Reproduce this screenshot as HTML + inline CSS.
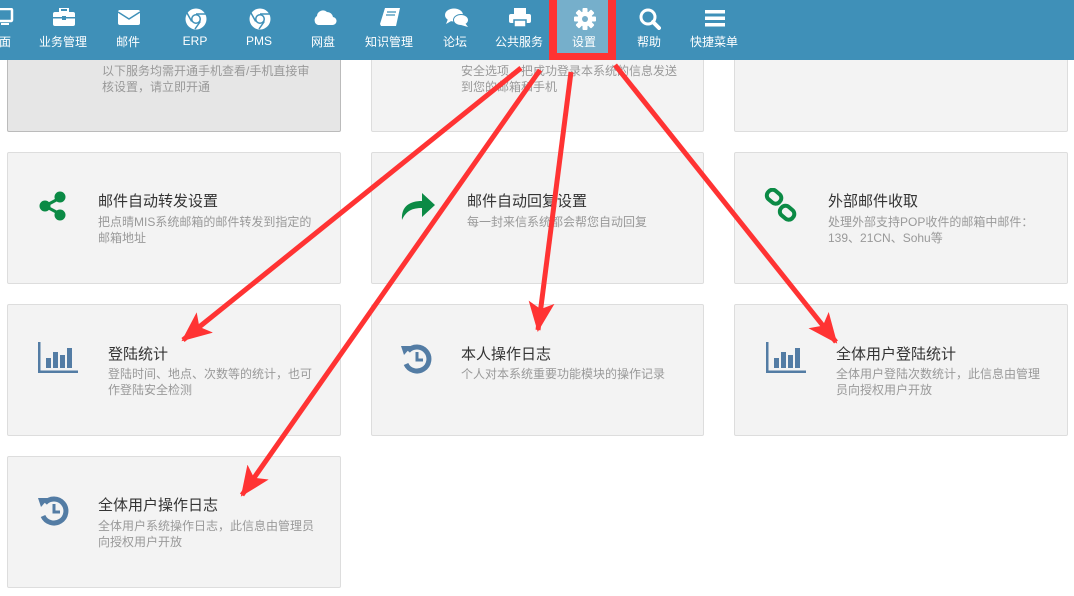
<!DOCTYPE html>
<html><head><meta charset="utf-8"><style>
*{margin:0;padding:0;box-sizing:border-box}
body{width:1074px;height:596px;overflow:hidden;background:#fff;font-family:"Liberation Sans","Noto Sans CJK SC",sans-serif;position:relative}
.nav{position:absolute;left:0;top:0;width:1074px;height:60px;background:#3f90b8}
.it{position:absolute;top:0;height:60px;color:#fff;font-size:12px;text-align:center;width:70px;margin-left:-35px}
.it svg{position:absolute;left:25px;top:8px}
.it span{position:absolute;left:0;right:0;top:33px}
.sel{position:absolute;left:549px;top:0;width:67px;height:60px;border:5px solid #f33;border-top:none;background:#f33}
.sel div{position:absolute;left:3px;top:0;width:51px;height:53px;background:#76afcb}
.card{position:absolute;background:#f3f3f3;border:1px solid #ddd;border-radius:2px}
.t{position:absolute;font-size:15px;color:#333}
.d{position:absolute;font-size:12px;color:#999;line-height:16px}
.ic{position:absolute}
</style></head><body>
<div class="card" style="left:7px;top:40px;width:334px;height:92px;background:#e6e6e6;border-color:#bbb"></div>
<div class="card" style="left:371px;top:40px;width:333px;height:92px"></div>
<div class="card" style="left:734px;top:40px;width:334px;height:92px"></div>
<div class="d" style="left:102px;top:63px">以下服务均需开通手机查看/手机直接审<br>核设置，请立即开通</div>
<div class="d" style="left:461px;top:63px">安全选项，把成功登录本系统的信息发送<br>到您的邮箱和手机</div>

<div class="card" style="left:7px;top:152px;width:334px;height:132px"></div>
<div class="card" style="left:371px;top:152px;width:333px;height:132px"></div>
<div class="card" style="left:734px;top:152px;width:334px;height:132px"></div>
<div class="card" style="left:7px;top:304px;width:334px;height:132px"></div>
<div class="card" style="left:371px;top:304px;width:333px;height:132px"></div>
<div class="card" style="left:734px;top:304px;width:334px;height:132px"></div>
<div class="card" style="left:7px;top:456px;width:334px;height:132px"></div>

<svg class="ic" style="left:37px;top:190px" width="32" height="32" viewBox="0 0 32 32"><g fill="#0b8a45" stroke="#0b8a45"><line x1="8" y1="16" x2="23" y2="8" stroke-width="3"/><line x1="8" y1="16" x2="23" y2="24" stroke-width="3"/><circle cx="23" cy="7" r="5"/><circle cx="8" cy="16" r="5"/><circle cx="23" cy="25" r="5"/></g></svg>
<div class="t" style="left:98px;top:190px">邮件自动转发设置</div>
<div class="d" style="left:98px;top:214px">把点晴MIS系统邮箱的邮件转发到指定的<br>邮箱地址</div>

<svg class="ic" style="left:398px;top:188px" width="40" height="36" viewBox="0 0 40 36"><path d="M4 32 C3 18 12 13 24 13 L24 5 L37 17 L24 29 L24 20 C14 20 8 23 4 32Z" fill="#0b8a45"/></svg>
<div class="t" style="left:467px;top:190px">邮件自动回复设置</div>
<div class="d" style="left:467px;top:214px">每一封来信系统都会帮您自动回复</div>

<svg class="ic" style="left:764px;top:188px" width="36" height="34" viewBox="0 0 36 34"><g fill="none" stroke="#0b8a45" stroke-width="4"><rect x="3" y="3" width="15" height="11" rx="5" transform="rotate(40 10 8)"/><rect x="16" y="19" width="15" height="11" rx="5" transform="rotate(40 23 24)"/></g></svg>
<div class="t" style="left:828px;top:190px">外部邮件收取</div>
<div class="d" style="left:828px;top:214px">处理外部支持POP收件的邮箱中邮件：<br>139、21CN、Sohu等</div>

<svg class="ic" style="left:37px;top:342px" width="42" height="32" viewBox="0 0 42 32"><g fill="#537ca4"><rect x="1" y="0" width="2.5" height="31"/><rect x="1" y="28.5" width="40" height="2.5"/><rect x="9" y="16" width="5" height="10"/><rect x="16" y="10" width="5" height="16"/><rect x="23" y="13" width="5" height="13"/><rect x="30" y="6" width="5" height="20"/></g></svg>
<div class="t" style="left:108px;top:343px">登陆统计</div>
<div class="d" style="left:108px;top:366px">登陆时间、地点、次数等的统计，也可<br>作登陆安全检测</div>

<svg class="ic" style="left:400px;top:342px" width="34" height="32" viewBox="0 0 34 32"><path d="M8 9 A12 12 0 1 1 6 22" fill="none" stroke="#537ca4" stroke-width="5"/><path d="M1 4 L12 4 L4 13Z" fill="#537ca4"/><path d="M17 10 V18 H23" fill="none" stroke="#537ca4" stroke-width="3"/></svg>
<div class="t" style="left:461px;top:343px">本人操作日志</div>
<div class="d" style="left:461px;top:366px">个人对本系统重要功能模块的操作记录</div>

<svg class="ic" style="left:765px;top:342px" width="42" height="32" viewBox="0 0 42 32"><g fill="#537ca4"><rect x="1" y="0" width="2.5" height="31"/><rect x="1" y="28.5" width="40" height="2.5"/><rect x="9" y="16" width="5" height="10"/><rect x="16" y="10" width="5" height="16"/><rect x="23" y="13" width="5" height="13"/><rect x="30" y="6" width="5" height="20"/></g></svg>
<div class="t" style="left:836px;top:343px">全体用户登陆统计</div>
<div class="d" style="left:836px;top:366px">全体用户登陆次数统计，此信息由管理<br>员向授权用户开放</div>

<svg class="ic" style="left:37px;top:494px" width="34" height="32" viewBox="0 0 34 32"><path d="M8 9 A12 12 0 1 1 6 22" fill="none" stroke="#537ca4" stroke-width="5"/><path d="M1 4 L12 4 L4 13Z" fill="#537ca4"/><path d="M17 10 V18 H23" fill="none" stroke="#537ca4" stroke-width="3"/></svg>
<div class="t" style="left:98px;top:494px">全体用户操作日志</div>
<div class="d" style="left:98px;top:518px">全体用户系统操作日志，此信息由管理员<br>向授权用户开放</div>

<div class="nav">
<div class="sel"><div></div></div>
<div class="it" style="left:5px"><svg width="20" height="18" viewBox="0 0 20 18"><rect x="2" y="1" width="15" height="12" rx="1" fill="none" stroke="#fff" stroke-width="2.5"/><rect x="6" y="15" width="8" height="2" fill="#fff"/></svg><span>面</span></div>
<div class="it" style="left:63px"><svg width="22" height="18" viewBox="0 0 22 18"><rect x="7" y="0" width="8" height="4" fill="none" stroke="#fff" stroke-width="2"/><rect x="0" y="4" width="22" height="14" rx="2" fill="#fff"/><rect x="0" y="9" width="22" height="1.5" fill="#3f90b8"/><rect x="9" y="8" width="4" height="4" fill="#3f90b8"/></svg><span>业务管理</span></div>
<div class="it" style="left:128px"><svg width="22" height="18" viewBox="0 0 22 18"><rect x="0" y="2" width="22" height="15" rx="2" fill="#fff"/><path d="M0 4 L11 11 L22 4" fill="none" stroke="#3f90b8" stroke-width="1.5"/></svg><span>邮件</span></div>
<div class="it" style="left:195px"><svg width="22" height="22" viewBox="0 0 22 22"><circle cx="11" cy="11" r="10.5" fill="#fff"/><circle cx="11" cy="11" r="5" fill="#3f90b8"/><circle cx="11" cy="11" r="3.5" fill="#fff"/><path d="M11 6 L21 6 M6.7 13.5 L2 5 M15.3 13.5 L10 21" stroke="#3f90b8" stroke-width="1.5"/></svg><span style="top:34px">ERP</span></div>
<div class="it" style="left:259px"><svg width="22" height="22" viewBox="0 0 22 22"><circle cx="11" cy="11" r="10.5" fill="#fff"/><circle cx="11" cy="11" r="5" fill="#3f90b8"/><circle cx="11" cy="11" r="3.5" fill="#fff"/><path d="M11 6 L21 6 M6.7 13.5 L2 5 M15.3 13.5 L10 21" stroke="#3f90b8" stroke-width="1.5"/></svg><span style="top:34px">PMS</span></div>
<div class="it" style="left:323px"><svg width="24" height="18" viewBox="0 0 24 18"><path d="M5 17 A5 5 0 0 1 4 8 A6 6 0 0 1 14 4 A6 6 0 0 1 20 9 A4 4 0 0 1 19 17Z" fill="#fff"/></svg><span>网盘</span></div>
<div class="it" style="left:389px"><svg width="22" height="20" viewBox="0 0 22 20"><path d="M6 0 H21 L17 18 H2 L1 16 Z" fill="#fff"/><path d="M8 4 H17 M7 7 H16" stroke="#3f90b8" stroke-width="1.3"/></svg><span>知识管理</span></div>
<div class="it" style="left:455px"><svg width="24" height="20" viewBox="0 0 24 20"><ellipse cx="9" cy="7" rx="9" ry="6.5" fill="#fff"/><path d="M3 11 L1 16 L8 12Z" fill="#fff"/><ellipse cx="16" cy="12" rx="7.5" ry="5.5" fill="#fff" stroke="#3f90b8" stroke-width="1"/><path d="M20 15 L23 19 L16 17Z" fill="#fff"/></svg><span>论坛</span></div>
<div class="it" style="left:519px"><svg width="22" height="20" viewBox="0 0 22 20"><rect x="5" y="0" width="12" height="6" fill="#fff"/><rect x="0" y="6" width="22" height="9" rx="2" fill="#fff"/><rect x="5" y="12" width="12" height="7" fill="#fff" stroke="#3f90b8" stroke-width="1.5"/></svg><span>公共服务</span></div>
<div class="it" style="left:584px"><svg width="22" height="22" viewBox="0 0 22 22"><g fill="#fff"><circle cx="11" cy="11" r="7.5"/><rect x="8.5" y="0" width="5" height="22" rx="1"/><rect x="8.5" y="0" width="5" height="22" rx="1" transform="rotate(45 11 11)"/><rect x="8.5" y="0" width="5" height="22" rx="1" transform="rotate(90 11 11)"/><rect x="8.5" y="0" width="5" height="22" rx="1" transform="rotate(135 11 11)"/></g><circle cx="11" cy="11" r="3" fill="#76afcb"/></svg><span>设置</span></div>
<div class="it" style="left:649px"><svg width="22" height="22" viewBox="0 0 22 22"><circle cx="9" cy="9" r="7" fill="none" stroke="#fff" stroke-width="3"/><path d="M14 14 L20 20" stroke="#fff" stroke-width="4" stroke-linecap="round"/></svg><span>帮助</span></div>
<div class="it" style="left:714px"><svg width="22" height="20" viewBox="0 0 22 20"><rect x="1" y="2" width="20" height="3.5" fill="#fff"/><rect x="1" y="8.5" width="20" height="3.5" fill="#fff"/><rect x="1" y="15" width="20" height="3.5" fill="#fff"/></svg><span>快捷菜单</span></div>
</div>

<svg style="position:absolute;left:0;top:0" width="1074" height="596">
<defs><marker id="h" markerUnits="userSpaceOnUse" markerWidth="30" markerHeight="26" refX="28" refY="13" orient="auto"><path d="M0 0 L30 13 L0 26 L7 13Z" fill="#f33"/></marker></defs>
<g stroke="#f33" fill="none" marker-end="url(#h)">
<path d="M521 68 L183 340" stroke-width="5"/>
<path d="M540 70 L242 495" stroke-width="5"/>
<path d="M571 72 L538 330" stroke-width="5"/>
<path d="M615 65 L836 342" stroke-width="5"/>
</g></svg>
</body></html>
